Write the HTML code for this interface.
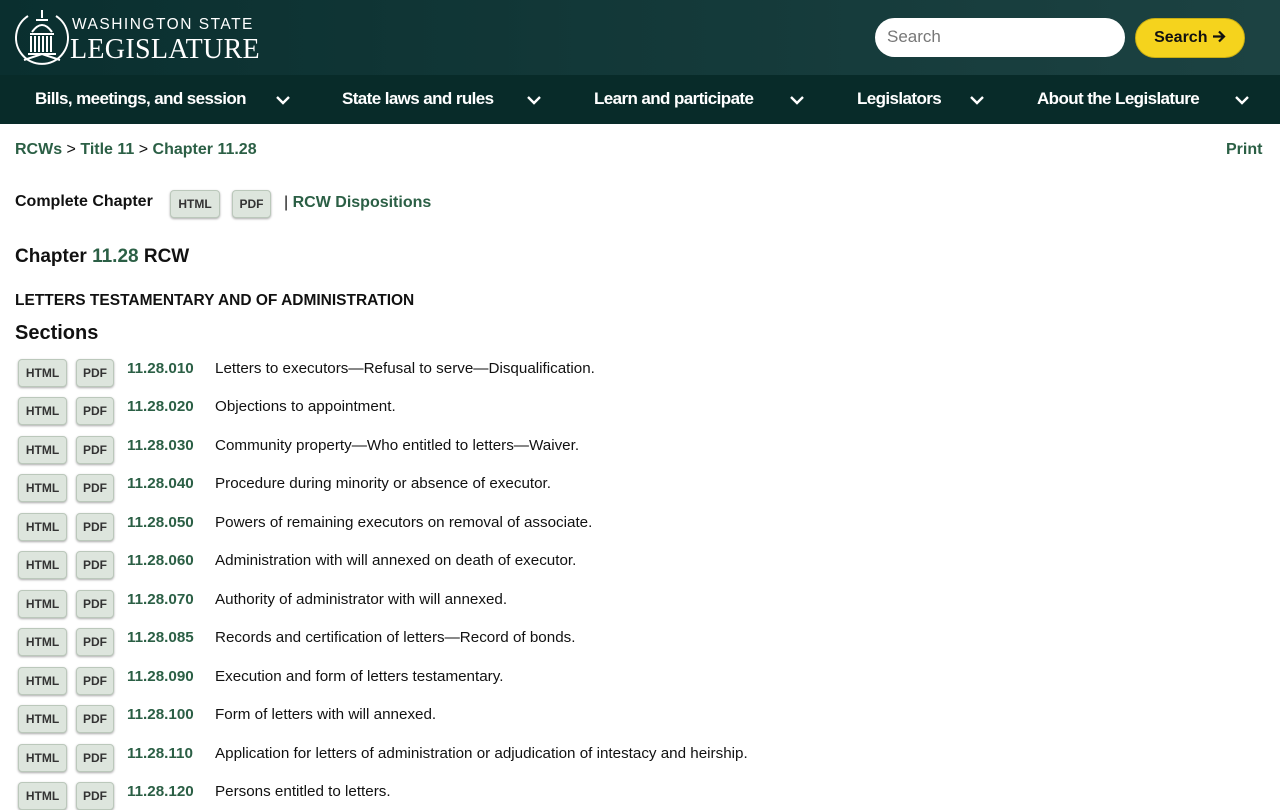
<!DOCTYPE html>
<html><head><meta charset="utf-8"><style>
*{margin:0;padding:0;box-sizing:border-box}
body{width:1280px;height:800px;overflow:hidden;background:#fff;font-family:"Liberation Sans",sans-serif;color:#111}
.top{height:75px;background:linear-gradient(90deg,#0a2f2f,#1c4242);position:relative}
.logo{position:absolute;left:14px;top:8px}
.wst{position:absolute;left:72px;top:16px;color:#fff;font-size:15.5px;letter-spacing:1.5px}
.leg{position:absolute;left:70px;top:34px;color:#fff;font-family:"Liberation Serif",serif;font-size:28px;letter-spacing:0.3px}
.search{position:absolute;left:875px;top:18px;width:250px;height:39px;border-radius:20px;background:#fff;color:#777;font-size:17px;padding:9px 12px}
.sbtn{position:absolute;left:1135px;top:18px;width:110px;height:40px;border-radius:20px;background:#f5d31d;border:1px solid #c9ad12;color:#111;font-weight:bold;font-size:16px;text-align:center;line-height:38px}
nav{height:49px;background:#082b29;position:relative;color:#fff;font-weight:bold;font-size:17px}
nav span{position:absolute;top:14px;letter-spacing:-0.6px}
nav svg{position:absolute;top:20px}
.g{color:#2b5f45}
a{color:#2b5f45;text-decoration:none;font-weight:bold}
.bc{position:absolute;top:141px;left:15px;font-size:16px}
.btn{display:inline-block;background:#dde5dd;border:1px solid #bbc8bb;border-radius:4px;box-shadow:0 1px 2px #aaa;font-size:12px;font-weight:bold;color:#333;text-align:center;height:28px;line-height:27px}
.row{position:absolute;left:18px;height:28px;font-size:15.2px}
.row .h{position:absolute;left:0;width:49px}
.row .p{position:absolute;left:58px;width:38px}
.row .n{position:absolute;left:109px;top:1px}
.row .d{position:absolute;left:197px;top:1px;white-space:nowrap}
</style></head><body>
<div class="top">
<svg class="logo" width="56" height="58" viewBox="0 0 56 58" fill="none" stroke="#fff" stroke-width="2"><path d="M14 8A26 26 0 1 0 42 8"/><path d="M28 2v8M22 12h12M18 24q10-14 20 0M16 26h24M17 28v16M21 28v16M25 28v16M29 28v16M33 28v16M37 28v16M14 46h28M10 52l18-6 18 6"/></svg>
<div class="wst">WASHINGTON STATE</div>
<div class="leg">LEGISLATURE</div>
<div class="search">Search</div>
<div class="sbtn">Search <svg width="14" height="13" viewBox="0 0 14 13" style="vertical-align:-1px"><path d="M1 6.5h11M7 1.5l5 5-5 5" stroke="#111" stroke-width="2.2" fill="none"/></svg></div>
</div>
<nav>
<span style="left:35px">Bills, meetings, and session</span>
<svg style="left:276px" width="14" height="10" viewBox="0 0 14 10"><path d="M1 2l6 6 6-6" stroke="#fff" stroke-width="2.4" fill="none"/></svg>
<span style="left:342px">State laws and rules</span>
<svg style="left:527px" width="14" height="10" viewBox="0 0 14 10"><path d="M1 2l6 6 6-6" stroke="#fff" stroke-width="2.4" fill="none"/></svg>
<span style="left:594px">Learn and participate</span>
<svg style="left:790px" width="14" height="10" viewBox="0 0 14 10"><path d="M1 2l6 6 6-6" stroke="#fff" stroke-width="2.4" fill="none"/></svg>
<span style="left:857px">Legislators</span>
<svg style="left:970px" width="14" height="10" viewBox="0 0 14 10"><path d="M1 2l6 6 6-6" stroke="#fff" stroke-width="2.4" fill="none"/></svg>
<span style="left:1037px">About the Legislature</span>
<svg style="left:1235px" width="14" height="10" viewBox="0 0 14 10"><path d="M1 2l6 6 6-6" stroke="#fff" stroke-width="2.4" fill="none"/></svg>
</nav>
<div class="bc"><a>RCWs</a> &gt; <a>Title 11</a> &gt; <a>Chapter 11.28</a></div>
<a style="position:absolute;top:141px;left:1226px;font-size:16px">Print</a>
<div style="position:absolute;top:193px;left:15px;font-size:16px;font-weight:bold">Complete Chapter</div>
<span class="btn" style="position:absolute;left:170px;top:190px;width:50px">HTML</span>
<span class="btn" style="position:absolute;left:232px;top:190px;width:39px">PDF</span>
<div style="position:absolute;top:194px;left:284px;font-size:16px">| <a>RCW Dispositions</a></div>
<div style="position:absolute;top:246px;left:15px;font-size:19px;font-weight:bold">Chapter <span class="g">11.28</span> RCW</div>
<div style="position:absolute;top:292px;left:15px;font-size:15.5px;font-weight:bold">LETTERS TESTAMENTARY AND OF ADMINISTRATION</div>
<div style="position:absolute;top:322px;left:15px;font-size:20px;font-weight:bold">Sections</div>

<div class="row" style="top:359px"><span class="btn h">HTML</span><span class="btn p">PDF</span><a class="n">11.28.010</a><span class="d">Letters to executors—Refusal to serve—Disqualification.</span></div>
<div class="row" style="top:397px"><span class="btn h">HTML</span><span class="btn p">PDF</span><a class="n">11.28.020</a><span class="d">Objections to appointment.</span></div>
<div class="row" style="top:436px"><span class="btn h">HTML</span><span class="btn p">PDF</span><a class="n">11.28.030</a><span class="d">Community property—Who entitled to letters—Waiver.</span></div>
<div class="row" style="top:474px"><span class="btn h">HTML</span><span class="btn p">PDF</span><a class="n">11.28.040</a><span class="d">Procedure during minority or absence of executor.</span></div>
<div class="row" style="top:513px"><span class="btn h">HTML</span><span class="btn p">PDF</span><a class="n">11.28.050</a><span class="d">Powers of remaining executors on removal of associate.</span></div>
<div class="row" style="top:551px"><span class="btn h">HTML</span><span class="btn p">PDF</span><a class="n">11.28.060</a><span class="d">Administration with will annexed on death of executor.</span></div>
<div class="row" style="top:590px"><span class="btn h">HTML</span><span class="btn p">PDF</span><a class="n">11.28.070</a><span class="d">Authority of administrator with will annexed.</span></div>
<div class="row" style="top:628px"><span class="btn h">HTML</span><span class="btn p">PDF</span><a class="n">11.28.085</a><span class="d">Records and certification of letters—Record of bonds.</span></div>
<div class="row" style="top:667px"><span class="btn h">HTML</span><span class="btn p">PDF</span><a class="n">11.28.090</a><span class="d">Execution and form of letters testamentary.</span></div>
<div class="row" style="top:705px"><span class="btn h">HTML</span><span class="btn p">PDF</span><a class="n">11.28.100</a><span class="d">Form of letters with will annexed.</span></div>
<div class="row" style="top:744px"><span class="btn h">HTML</span><span class="btn p">PDF</span><a class="n">11.28.110</a><span class="d">Application for letters of administration or adjudication of intestacy and heirship.</span></div>
<div class="row" style="top:782px"><span class="btn h">HTML</span><span class="btn p">PDF</span><a class="n">11.28.120</a><span class="d">Persons entitled to letters.</span></div>
</body></html>
